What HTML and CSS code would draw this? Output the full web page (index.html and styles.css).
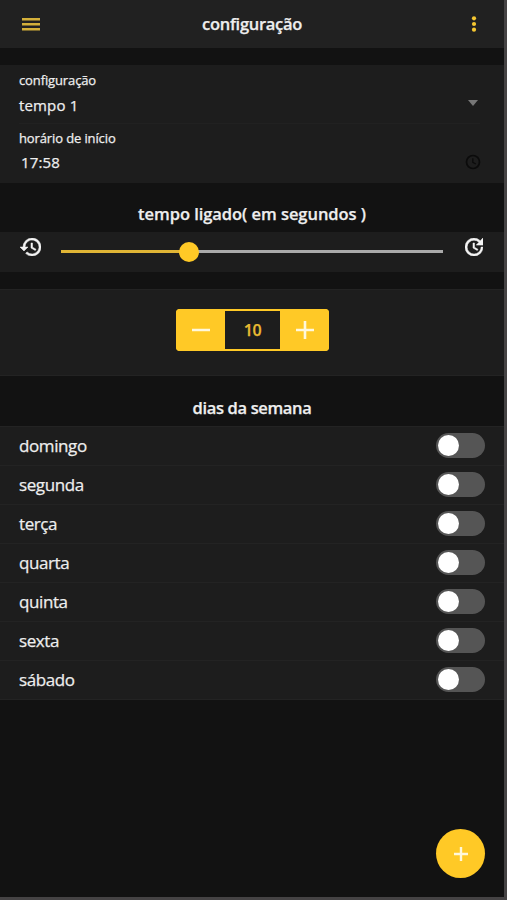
FILE: index.html
```
<!DOCTYPE html>
<html lang="pt-br">
<head>
  <meta charset="UTF-8">
  <meta name="viewport" content="width=device-width, initial-scale=1.0">
  <title>configuração</title>
  <link rel="stylesheet" href="styles.css">
</head>
<body>
  <div class="app">
    <header>
      <svg class="icon-menu" width="18" height="13" viewBox="0 0 18 13"><path d="M0 1.2h18M0 6.2h18M0 11.2h18" stroke="#d4b03a" stroke-width="2.4"/></svg>
      <h1>configuração</h1>
      <svg class="icon-more" width="6" height="18" viewBox="0 0 6 18" fill="#f5c731"><circle cx="3" cy="3.3" r="2.1"/><circle cx="3" cy="9" r="2.1"/><circle cx="3" cy="14.7" r="2.1"/></svg>
    </header>

    <main>
      <section class="card campos">
        <div class="campo">
          <span class="rotulo">configuração</span>
          <div class="valor"><span>tempo 1</span>
            <svg class="seta" width="10" height="6" viewBox="0 0 10 6"><path d="M0 0h10L5 6z" fill="#777"/></svg>
          </div>
        </div>
        <div class="campo">
          <span class="rotulo">horário de início</span>
          <div class="valor hora"><span>17:58</span>
            <svg class="relogio" width="16" height="16" viewBox="0 0 16 16" fill="none" stroke="#0b0b0b" stroke-width="1.7"><circle cx="8" cy="8" r="6.5"/><path d="M7.8 4.2v4.2l3 1.6" stroke-width="1.3"/></svg>
          </div>
        </div>
      </section>

      <h2 class="ligado">tempo ligado( em segundos )</h2>
      <section class="card slider">
        <svg width="21" height="18" viewBox="0 0 21 18"><path d="M12 0a9 9 0 0 0-9 9H0l3.9 3.9.1.1L8 9H5a7 7 0 1 1 2.06 4.94l-1.42 1.42A9 9 0 1 0 12 0zm-1 5v5l4.25 2.52.77-1.28-3.52-2.09V5z" fill="#f4f4f4" stroke="#f4f4f4" stroke-width=".5"/></svg>
        <div class="trilho"><div class="preenchido" style="width:33.4%"></div><div class="botao"></div></div>
        <svg width="18" height="18" viewBox="0 0 18 18"><path d="M18 7.12h-6.78l2.74-2.82a6.9 6.9 0 0 0-9.81-.1 6.88 6.88 0 0 0 0 9.79 6.96 6.96 0 0 0 9.81 0C15.32 12.65 16 11.08 16 9.1h2c0 1.98-.88 4.55-2.64 6.29a9.03 9.03 0 0 1-12.73 0A8.97 8.97 0 0 1 2.6 2.66a8.95 8.95 0 0 1 12.65 0L18 0v7.12zM9.5 5v4.25l3.5 2.08-.72 1.21L8 10V5h1.5z" fill="#f4f4f4" stroke="#f4f4f4" stroke-width=".5"/></svg>
      </section>

      <section class="card contador">
        <div class="stepper">
          <button aria-label="diminuir"><svg width="18" height="18" viewBox="0 0 18 18"><path d="M0 9h18" stroke="#fff8dc" stroke-width="2.6"/></svg></button>
          <span class="numero">10</span>
          <button aria-label="aumentar"><svg width="18" height="18" viewBox="0 0 18 18"><path d="M0 9h18M9 0v18" stroke="#fff8dc" stroke-width="2.6"/></svg></button>
        </div>
      </section>

      <h2 class="semana">dias da semana</h2>
      <ul class="card dias">
        <li><span>domingo</span><i class="toggle"></i></li>
        <li><span>segunda</span><i class="toggle"></i></li>
        <li><span>terça</span><i class="toggle"></i></li>
        <li><span>quarta</span><i class="toggle"></i></li>
        <li><span>quinta</span><i class="toggle"></i></li>
        <li><span>sexta</span><i class="toggle"></i></li>
        <li><span>sábado</span><i class="toggle"></i></li>
      </ul>
    </main>

    <button class="fab" aria-label="adicionar"><svg width="14" height="14" viewBox="0 0 14 14"><path d="M0 7h14M7 0v14" stroke="#fff8dc" stroke-width="2.4"/></svg></button>
  </div>
</body>
</html>
```
FILE: styles.css
```
* {
  box-sizing: border-box;
}

body {
  margin: 0;
  font-family: 'Segoe UI', 'Open Sans', 'Noto Sans', sans-serif;
  font-weight: 500;
  -webkit-text-stroke: 0.25px;
  background-color: #121212;
  color: #eee;
}

svg {
  display: block;
  flex-shrink: 0;
}

button {
  display: flex;
  align-items: center;
  justify-content: center;
  padding: 0;
  border: none;
  background: #ffc926;
}

.app {
  position: relative;
  height: 900px;
  overflow: hidden;
  border-right: 3px solid #454344;
  border-bottom: 3px solid #454344;
}

header {
  display: grid;
  grid-template-columns: 60px 1fr 60px;
  align-items: center;
  height: 48px;
  padding: 0 27px 0 22px;
  background-color: #212121;
}

.icon-more {
  justify-self: end;
}

h1,
h2 {
  margin: 0;
  font-size: 16.5px;
  font-weight: 650;
  line-height: 24px;
  text-align: center;
  white-space: nowrap;
}

h1 {
  letter-spacing: -0.3px;
  padding-left: 5px;
}

h2 {
  letter-spacing: -0.05px;
}

.card {
  background-color: #1d1d1d;
}

.campos {
  height: 118px;
  margin-top: 17px;
  padding: 0 24px 0 19px;
}

.campo {
  height: 58px;
  padding-top: 6px;
}

.campo:first-child {
  box-shadow: 0 1px #212121;
}

.rotulo {
  display: block;
  font-size: 13px;
  line-height: 18px;
  letter-spacing: -0.12px;
}

.valor {
  display: flex;
  align-items: center;
  justify-content: space-between;
  height: 32px;
  font-size: 15px;
  letter-spacing: 0.15px;
}

.seta {
  margin: -4px 2px 0 0;
}

.hora {
  height: 30px;
  padding-left: 2px;
}

.relogio {
  margin-right: -1px;
}

.ligado {
  height: 49px;
  padding-top: 19px;
}

.slider {
  display: flex;
  height: 40px;
  padding: 6px 21px 0 20px;
}

.trilho {
  position: relative;
  flex: 1;
  height: 3px;
  margin: 12px 22px 0 20px;
  background: #aaa;
}

.preenchido {
  height: 3px;
  background: #e0b535;
}

.botao {
  position: absolute;
  top: -8px;
  left: 33.4%;
  width: 20px;
  height: 20px;
  margin-left: -10px;
  border-radius: 50%;
  background: #ffc926;
}

.contador {
  display: flex;
  justify-content: center;
  height: 87px;
  margin-top: 17px;
  padding-top: 19px;
  border-top: 1px solid #232323;
  border-bottom: 1px solid #232323;
}

.stepper {
  display: flex;
  width: 153px;
  height: 42px;
  margin-left: 1px;
  border-radius: 4px;
  overflow: hidden;
  background: #ffc926;
}

.stepper button {
  width: 49px;
}

.numero {
  flex: 1;
  margin: 2px 0;
  background: #1d1d1d;
  color: #e8bb32;
  font-size: 16px;
  font-weight: 650;
  line-height: 39px;
  letter-spacing: -0.5px;
  text-align: center;
}

.semana {
  height: 50px;
  padding-top: 20px;
  letter-spacing: -0.35px;
}

.dias {
  height: 274px;
  margin: 0;
  padding: 0;
  list-style: none;
  border-top: 1px solid #232323;
}

.dias li {
  display: flex;
  align-items: center;
  justify-content: space-between;
  height: 39px;
  padding: 0 19px 1px;
  border-bottom: 1px solid #232323;
  font-size: 17px;
  letter-spacing: -0.4px;
}

.toggle {
  width: 49px;
  height: 25px;
  padding: 2px;
  border-radius: 13px;
  background: #555;
}

.toggle::before {
  content: '';
  display: block;
  width: 21px;
  height: 21px;
  border-radius: 50%;
  background: #fff;
}

.fab {
  position: absolute;
  right: 19px;
  bottom: 19px;
  width: 49px;
  height: 49px;
  border-radius: 50%;
}
```
